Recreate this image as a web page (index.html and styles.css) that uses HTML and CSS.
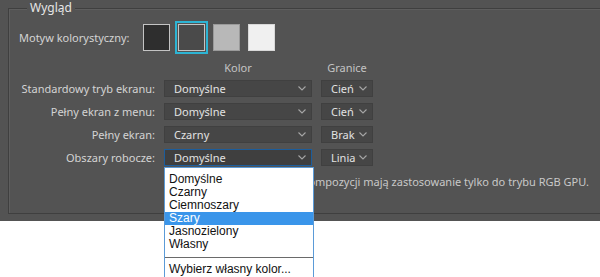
FILE: index.html
```html
<!DOCTYPE html>
<html lang="pl">
<head>
    <meta charset="UTF-8">
    <meta name="viewport" content="width=device-width, initial-scale=1.0">
    <title>Preferencje - Wygląd</title>
    <link rel="stylesheet" href="styles.css">
</head>
<body>
    <div class="panel">
        <div class="group">
            <div class="group-title">Wygląd</div>

            <div class="theme-row">
                <span class="theme-label">Motyw kolorystyczny:</span>
                <div class="swatches">
                    <span class="swatch swatch-black"></span>
                    <span class="swatch swatch-dark selected"></span>
                    <span class="swatch swatch-light"></span>
                    <span class="swatch swatch-white"></span>
                </div>
            </div>

            <div class="screen-grid">
                <span></span>
                <span class="col-head">Kolor</span>
                <span class="col-head">Granice</span>

                <label>Standardowy tryb ekranu:</label>
                <div class="dropdown">Domyślne<svg class="chevron" width="8" height="5" viewBox="0 0 8 5"><polyline points="0.5,0.5 4,4 7.5,0.5"/></svg></div>
                <div class="dropdown">Cień<svg class="chevron" width="8" height="5" viewBox="0 0 8 5"><polyline points="0.5,0.5 4,4 7.5,0.5"/></svg></div>

                <label>Pełny ekran z menu:</label>
                <div class="dropdown">Domyślne<svg class="chevron" width="8" height="5" viewBox="0 0 8 5"><polyline points="0.5,0.5 4,4 7.5,0.5"/></svg></div>
                <div class="dropdown">Cień<svg class="chevron" width="8" height="5" viewBox="0 0 8 5"><polyline points="0.5,0.5 4,4 7.5,0.5"/></svg></div>

                <label>Pełny ekran:</label>
                <div class="dropdown">Czarny<svg class="chevron" width="8" height="5" viewBox="0 0 8 5"><polyline points="0.5,0.5 4,4 7.5,0.5"/></svg></div>
                <div class="dropdown">Brak<svg class="chevron" width="8" height="5" viewBox="0 0 8 5"><polyline points="0.5,0.5 4,4 7.5,0.5"/></svg></div>

                <label>Obszary robocze:</label>
                <div class="dropdown focused">Domyślne<svg class="chevron" width="8" height="5" viewBox="0 0 8 5"><polyline points="0.5,0.5 4,4 7.5,0.5"/></svg>
                    <ul class="menu">
                        <li>Domyślne</li>
                        <li>Czarny</li>
                        <li>Ciemnoszary</li>
                        <li class="active">Szary</li>
                        <li>Jasnozielony</li>
                        <li>Własny</li>
                        <li class="sep"></li>
                        <li>Wybierz własny kolor...</li>
                    </ul>
                </div>
                <div class="dropdown">Linia<svg class="chevron" width="8" height="5" viewBox="0 0 8 5"><polyline points="0.5,0.5 4,4 7.5,0.5"/></svg></div>
            </div>

            <p class="note">Ustawienia granic i kompozycji mają zastosowanie tylko do trybu RGB GPU.</p>
        </div>
    </div>
</body>
</html>
```

FILE: styles.css
```css
html {
    overflow: hidden;
}
body {
    margin: 0;
    min-height: 277px;
    background: #fff;
    font-family: "Noto Sans", "Open Sans", sans-serif;
    font-size: 11px;
}
.panel {
    height: 221px;
    padding-top: 8px;
    box-sizing: border-box;
    background-color: #535353;
    color: #d4d4d4;
}
.group {
    margin: 0 -20px 0 8px;
    height: 206px;
    box-sizing: border-box;
    border: 1px solid #3f3f3f;
    box-shadow: 1px 1px 0 #5e5e5e inset;
}
.group-title {
    width: fit-content;
    margin: -8px 0 0 18px;
    padding: 0 3px;
    background: #535353;
    font-size: 12px;
    line-height: 14px;
    color: #e6e6e6;
}
.theme-row {
    display: flex;
    align-items: center;
    padding: 9px 0 0 10px;
}
.theme-label {
    width: 124px;
}
.swatches {
    display: flex;
    gap: 8px;
}
.swatch {
    width: 27px;
    height: 27px;
    box-sizing: border-box;
    border: 1px solid #c4c4c4;
}
.swatch-black { background: #2e2e2e; }
.swatch-dark { background: #4a4a4a; }
.swatch-light { background: #b8b8b8; border-color: #9a9a9a; }
.swatch-white { background: #f0f0f0; border-color: #d8d8d8; }
.swatch.selected {
    outline: 2px solid #2cb4d4;
    outline-offset: 1px;
}
.screen-grid {
    display: grid;
    grid-template-columns: 146px 148px 52px;
    column-gap: 9px;
    row-gap: 6px;
    align-items: center;
    margin-top: 10px;
}
.screen-grid label {
    text-align: right;
}
.col-head {
    text-align: center;
    color: #c4c4c4;
    line-height: 14px;
    margin-bottom: -1px;
}
.dropdown {
    position: relative;
    display: flex;
    align-items: center;
    justify-content: space-between;
    height: 17px;
    padding: 0 5px 0 9px;
    box-sizing: border-box;
    background: #464646;
    border: 1px solid #404040;
    color: #e2e2e2;
}
.dropdown.focused {
    background: #3f3f3f;
    border-color: #1c5d9c;
}
.chevron {
    fill: none;
    stroke: #a6a6a6;
    stroke-width: 1.1;
}
.menu {
    position: absolute;
    z-index: 2;
    top: 17px;
    left: -1px;
    width: 150px;
    margin: 0;
    padding: 5px 0 2px;
    list-style: none;
    box-sizing: border-box;
    background: #fff;
    border: 1px solid #5b9bd8;
    font-family: "Liberation Sans", Arial, sans-serif;
    font-size: 12px;
    line-height: 13px;
    color: #111;
}
.menu li {
    padding-left: 4px;
}
.menu li.active {
    background: #3a95ea;
    color: #fff;
}
.menu li.sep {
    height: 1px;
    margin: 6px 0 5px;
    padding: 0;
    background: #6a6a6a;
}
.note {
    margin: 8px 0 0 193px;
    color: #c8c8c8;
}
```
